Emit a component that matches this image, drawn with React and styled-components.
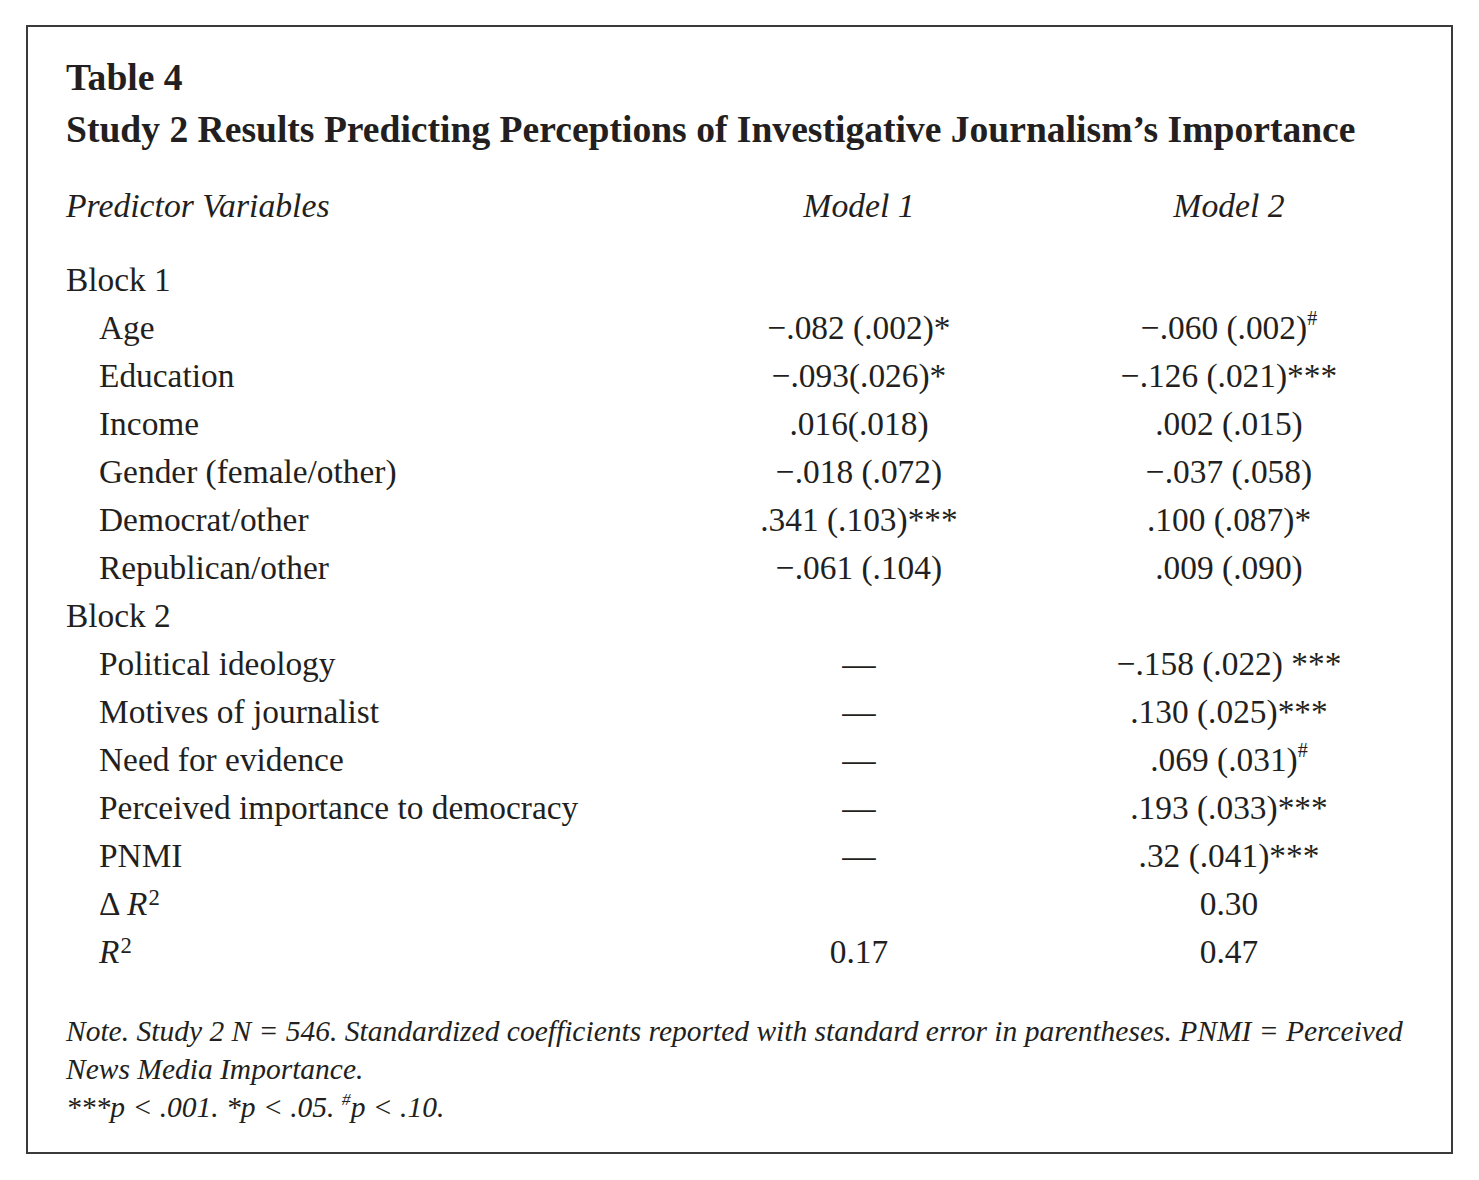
import React from "react";
import styled, { createGlobalStyle } from "styled-components";

const GlobalStyle = createGlobalStyle`
  html, body {
    margin: 0;
    padding: 0;
    background: #ffffff;
  }
  body {
    font-family: "Liberation Serif", "Times New Roman", serif;
    color: #231f20;
  }
`;

const rows = [
  { type: "block", label: "Block 1" },
  { label: "Age", m1: "−.082 (.002)*", m2: ["−.060 (.002)", "#"] },
  { label: "Education", m1: "−.093(.026)*", m2: "−.126 (.021)***" },
  { label: "Income", m1: ".016(.018)", m2: ".002 (.015)" },
  { label: "Gender (female/other)", m1: "−.018 (.072)", m2: "−.037 (.058)" },
  { label: "Democrat/other", m1: ".341 (.103)***", m2: ".100 (.087)*" },
  { label: "Republican/other", m1: "−.061 (.104)", m2: ".009 (.090)" },
  { type: "block", label: "Block 2" },
  { label: "Political ideology", m1: "—", m2: "−.158 (.022) ***" },
  { label: "Motives of journalist", m1: "—", m2: ".130 (.025)***" },
  { label: "Need for evidence", m1: "—", m2: [".069 (.031)", "#"] },
  { label: "Perceived importance to democracy", m1: "—", m2: ".193 (.033)***" },
  { label: "PNMI", m1: "—", m2: ".32 (.041)***" },
];

export default function App() {
  return (
    <>
      <GlobalStyle />
      <Frame>
        <Caption>
          <TableNumber>Table 4</TableNumber>
          <TableTitle>
            Study 2 Results Predicting Perceptions of Investigative Journalism’s Importance
          </TableTitle>
        </Caption>

        <HeaderRow>
          <HeadCell>Predictor Variables</HeadCell>
          <HeadCell $center>Model 1</HeadCell>
          <HeadCell $center>Model 2</HeadCell>
        </HeaderRow>

        <Body>
          {rows.map((row) =>
            row.type === "block" ? (
              <Row key={row.label}>
                <Label>{row.label}</Label>
                <Value />
                <Value />
              </Row>
            ) : (
              <Row key={row.label}>
                <Label $indent>{row.label}</Label>
                <Value>{renderValue(row.m1)}</Value>
                <Value>{renderValue(row.m2)}</Value>
              </Row>
            )
          )}
          <Row>
            <Label $indent>
              Δ <Ital>R</Ital>
              <Square>2</Square>
            </Label>
            <Value />
            <Value>0.30</Value>
          </Row>
          <Row>
            <Label $indent>
              <Ital>R</Ital>
              <Square>2</Square>
            </Label>
            <Value>0.17</Value>
            <Value>0.47</Value>
          </Row>
        </Body>

        <Note>
          <NoteLine>
            Note. Study 2 N = 546. Standardized coefficients reported with standard error in
            parentheses. PNMI = Perceived
          </NoteLine>
          <NoteLine>News Media Importance.</NoteLine>
          <NoteLine>
            ***p &lt; .001. *p &lt; .05. <NoteSup>#</NoteSup>p &lt; .10.
          </NoteLine>
        </Note>
      </Frame>
    </>
  );
}

function renderValue(v) {
  if (Array.isArray(v)) {
    return (
      <>
        {v[0]}
        <Sup>{v[1]}</Sup>
      </>
    );
  }
  return v;
}

const Frame = styled.div`
  box-sizing: border-box;
  margin: 25px 0 0 26px;
  width: 1427px;
  height: 1129px;
  border: 2px solid #3a3a3a;
  padding: 25px 0 0 38px;
  display: flex;
  flex-direction: column;
`;

const Caption = styled.div`
  display: flex;
  flex-direction: column;
`;

const TableNumber = styled.div`
  font-weight: bold;
  font-size: 37.6px;
  line-height: 52px;
  height: 54px;
`;

const TableTitle = styled.div`
  font-weight: bold;
  font-size: 37.6px;
  line-height: 48px;
  white-space: nowrap;
`;

const HeaderRow = styled.div`
  display: grid;
  grid-template-columns: 610px 366px 374px;
  margin-top: 28px;
  height: 48px;
  align-items: center;
`;

const HeadCell = styled.div`
  font-style: italic;
  font-size: 33.7px;
  line-height: 48px;
  text-align: ${(p) => (p.$center ? "center" : "left")};
`;

const Body = styled.div`
  margin-top: 26px;
  display: flex;
  flex-direction: column;
`;

const Row = styled.div`
  display: grid;
  grid-template-columns: 610px 366px 374px;
  height: 48px;
  align-items: center;
  font-size: 33.4px;
  line-height: 48px;
`;

const Label = styled.div`
  padding-left: ${(p) => (p.$indent ? "33px" : "0")};
  white-space: nowrap;
`;

const Value = styled.div`
  text-align: center;
  white-space: nowrap;
`;

const Ital = styled.span`
  font-style: italic;
`;

const Sup = styled.sup`
  font-size: 0.6em;
  line-height: 0;
  vertical-align: 0.72em;
`;

const Square = styled.sup`
  font-size: 0.68em;
  line-height: 0;
  vertical-align: 0.45em;
  margin-left: 1px;
`;

const Note = styled.div`
  margin-top: 36px;
  font-style: italic;
  font-size: 29.5px;
  line-height: 38px;
  display: flex;
  flex-direction: column;
`;

const NoteLine = styled.div`
  white-space: nowrap;
`;

const NoteSup = styled.sup`
  font-size: 0.6em;
  line-height: 0;
  vertical-align: 0.7em;
`;
